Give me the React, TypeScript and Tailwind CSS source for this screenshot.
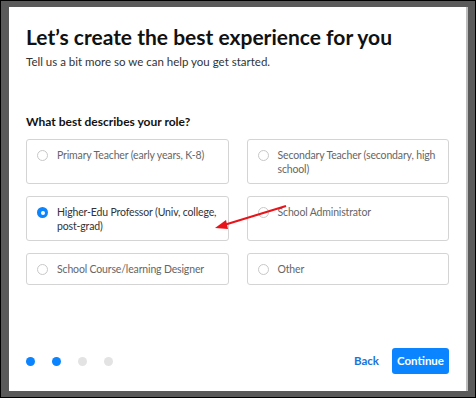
import React from "react";

const roles = [
  { label: "Primary Teacher (early years, K-8)", selected: false },
  { label: "Secondary Teacher (secondary, high school)", selected: false },
  { label: "Higher-Edu Professor (Univ, college, post-grad)", selected: true },
  { label: "School Administrator", selected: false },
  { label: "School Course/learning Designer", selected: false },
  { label: "Other", selected: false },
];

function Radio({ on }: { on: boolean }) {
  if (on) {
    return (
      <span className="mt-[2px] flex h-[11px] w-[11px] shrink-0 items-center justify-center rounded-full bg-[#0a84ff]">
        <span className="h-[4px] w-[4px] rounded-full bg-white" />
      </span>
    );
  }
  return <span className="mt-[2px] h-[11px] w-[11px] shrink-0 rounded-full border border-[#c8c8c8] bg-white" />;
}

export default function App() {
  return (
    <div
      className="h-[398px] w-[476px] border border-black bg-[#5a5a5a] pl-[8px] pr-[7px] pt-[6px] pb-[6px]"
      style={{ fontFamily: 'Lato, "Open Sans", sans-serif' }}
    >
      <div className="relative flex h-full flex-col border-r-2 border-[#bdbdbd] bg-white px-[17px] pt-[16px] pb-[17px]">
        <h1 className="text-[21px] font-bold leading-[28px] text-[#111]">
          Let’s create the best experience for you
        </h1>
        <p className="mt-[3px] text-[11.5px] leading-[16px] text-[#333]">
          Tell us a bit more so we can help you get started.
        </p>

        <h2 className="mt-[44px] text-[12px] font-bold leading-[16px] text-[#111]">
          What best describes your role?
        </h2>

        <div className="mt-[9px] grid grid-cols-2 gap-x-[18px] gap-y-[12px]">
          {roles.map((r, i) => (
            <div
              key={r.label}
              className={`flex gap-[9px] rounded-[3px] border border-[#d4d4d4] pl-[10px] pr-[4px] pt-[8px] ${
                i < 4 ? "h-[45px]" : "h-[32px]"
              }`}
            >
              <Radio on={r.selected} />
              <span
                className={`text-[10.5px] leading-[14px] tracking-[-0.15px] ${
                  r.selected ? "text-[#333]" : "text-[#666]"
                }`}
              >
                {r.label}
              </span>
            </div>
          ))}
        </div>

        <div className="mt-auto flex items-center justify-between">
          <div className="flex gap-[17px]">
            <span className="h-[9px] w-[9px] rounded-full bg-[#0a84ff]" />
            <span className="h-[9px] w-[9px] rounded-full bg-[#0a84ff]" />
            <span className="h-[9px] w-[9px] rounded-full bg-[#e3e3e3]" />
            <span className="h-[9px] w-[9px] rounded-full bg-[#e3e3e3]" />
          </div>
          <div className="flex items-center gap-[13px]">
            <button className="text-[11.5px] font-bold text-[#1a73d9]">Back</button>
            <button className="h-[26px] w-[57px] rounded-[3px] bg-[#0a84ff] text-[11.5px] font-bold text-white">
              Continue
            </button>
          </div>
        </div>

        {/* annotation arrow */}
        <svg
          className="pointer-events-none absolute left-[200px] top-[192px]"
          width="90"
          height="40"
          viewBox="0 0 90 40"
        >
          <line x1="77" y1="7" x2="15" y2="26" stroke="#e8141a" strokeWidth="2" />
          <polygon points="6,29 17,21 19,30" fill="#e8141a" />
        </svg>
      </div>
    </div>
  );
}
